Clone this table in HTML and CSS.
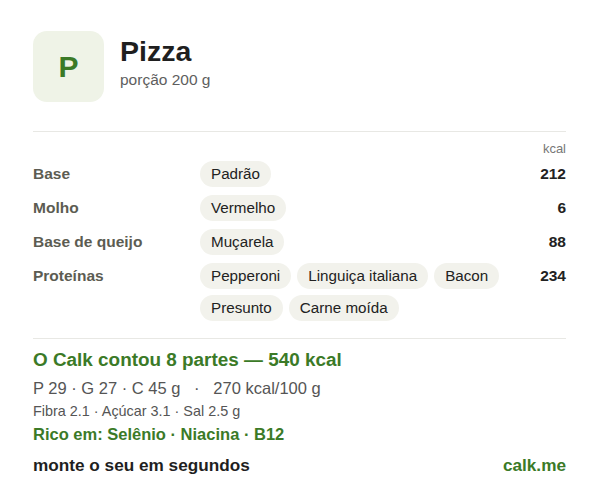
FILE: index.html
```html
<!DOCTYPE html>
<html lang="pt-BR">
<head>
    <meta charset="UTF-8">
    <meta name="viewport" content="width=device-width, initial-scale=1.0">
    <title>Pizza - Calk</title>
    <link rel="stylesheet" href="styles.css">
</head>
<body>

    <div class="card">
        <div class="header">
            <div class="avatar">P</div>
            <div class="header-text">
                <h1>Pizza</h1>
                <p class="portion">porção 200 g</p>
            </div>
        </div>

        <div class="parts">
            <div class="unit">kcal</div>

            <div class="row">
                <div class="label">Base</div>
                <div class="chips"><span class="chip">Padrão</span></div>
                <div class="value">212</div>
            </div>
            <div class="row">
                <div class="label">Molho</div>
                <div class="chips"><span class="chip">Vermelho</span></div>
                <div class="value">6</div>
            </div>
            <div class="row">
                <div class="label">Base de queijo</div>
                <div class="chips"><span class="chip">Muçarela</span></div>
                <div class="value">88</div>
            </div>
            <div class="row">
                <div class="label">Proteínas</div>
                <div class="chips">
                    <span class="chip">Pepperoni</span>
                    <span class="chip">Linguiça italiana</span>
                    <span class="chip">Bacon</span>
                    <span class="chip">Presunto</span>
                    <span class="chip">Carne moída</span>
                </div>
                <div class="value">234</div>
            </div>
        </div>

        <div class="summary">
            <h2>O Calk contou 8 partes — 540 kcal</h2>
            <p class="macros">P 29 · G 27 · C 45 g &nbsp; · &nbsp; 270 kcal/100 g</p>
            <p class="extras">Fibra 2.1 · Açúcar 3.1 · Sal 2.5 g</p>
            <p class="rich">Rico em: Selênio · Niacina · B12</p>
        </div>

        <div class="footer">
            <span class="cta">monte o seu em segundos</span>
            <span class="brand">calk.me</span>
        </div>
    </div>

</body>
</html>
```

FILE: styles.css
```css
body {
    margin: 0;
    padding: 0;
    background-color: #ffffff;
    font-family: "Liberation Sans", Arial, sans-serif;
    color: #222;
}

.card {
    padding: 31px 34px 0 33px;
}

.header {
    display: flex;
    align-items: center;
    gap: 16px;
    padding-bottom: 29px;
    border-bottom: 1px solid #e8e8e4;
}

.avatar {
    width: 71px;
    height: 71px;
    border-radius: 14px;
    background-color: #eff3e7;
    color: #3b7a27;
    font-size: 30px;
    font-weight: bold;
    display: flex;
    justify-content: center;
    align-items: center;
}

.header-text {
    margin-top: -10px;
}

h1 {
    margin: 0;
    font-size: 28.5px;
    line-height: 32px;
    color: #1f1f1f;
}

.portion {
    margin: 4px 0 0;
    font-size: 15.5px;
    color: #5e5e5e;
}

.parts {
    padding-top: 10px;
    padding-bottom: 17px;
    border-bottom: 1px solid #e8e8e4;
}

.unit {
    text-align: right;
    font-size: 13px;
    line-height: 13px;
    color: #777;
    margin-bottom: 6px;
}

.row {
    display: grid;
    grid-template-columns: 167px 1fr 60px;
    align-items: start;
    margin-bottom: 8px;
}

.row:last-child {
    margin-bottom: 0;
}

.label,
.value {
    font-size: 15.5px;
    font-weight: bold;
    line-height: 26px;
}

.label {
    color: #5c5c52;
}

.value {
    text-align: right;
    color: #222;
}

.chips {
    display: flex;
    flex-wrap: wrap;
    gap: 6px 6px;
}

.chip {
    background-color: #f2f2ec;
    border-radius: 13px;
    padding: 0 11px;
    font-size: 15.2px;
    line-height: 26px;
    color: #222;
}

.summary {
    padding-top: 9px;
}

h2 {
    margin: 0;
    font-size: 18.9px;
    line-height: 24px;
    color: #3b7a27;
}

.macros {
    margin: 6px 0 0;
    font-size: 16.5px;
    line-height: 20px;
    color: #555;
}

.extras {
    margin: 5px 0 0;
    font-size: 14.4px;
    line-height: 16px;
    color: #555;
}

.rich {
    margin: 5px 0 0;
    font-size: 16.5px;
    font-weight: bold;
    line-height: 20px;
    color: #3b7a27;
}

.footer {
    display: flex;
    justify-content: space-between;
    align-items: center;
    margin-top: 11px;
    font-size: 17.2px;
    font-weight: bold;
    line-height: 20px;
}

.cta {
    color: #1f1f1f;
}

.brand {
    color: #3b7a27;
}
```
